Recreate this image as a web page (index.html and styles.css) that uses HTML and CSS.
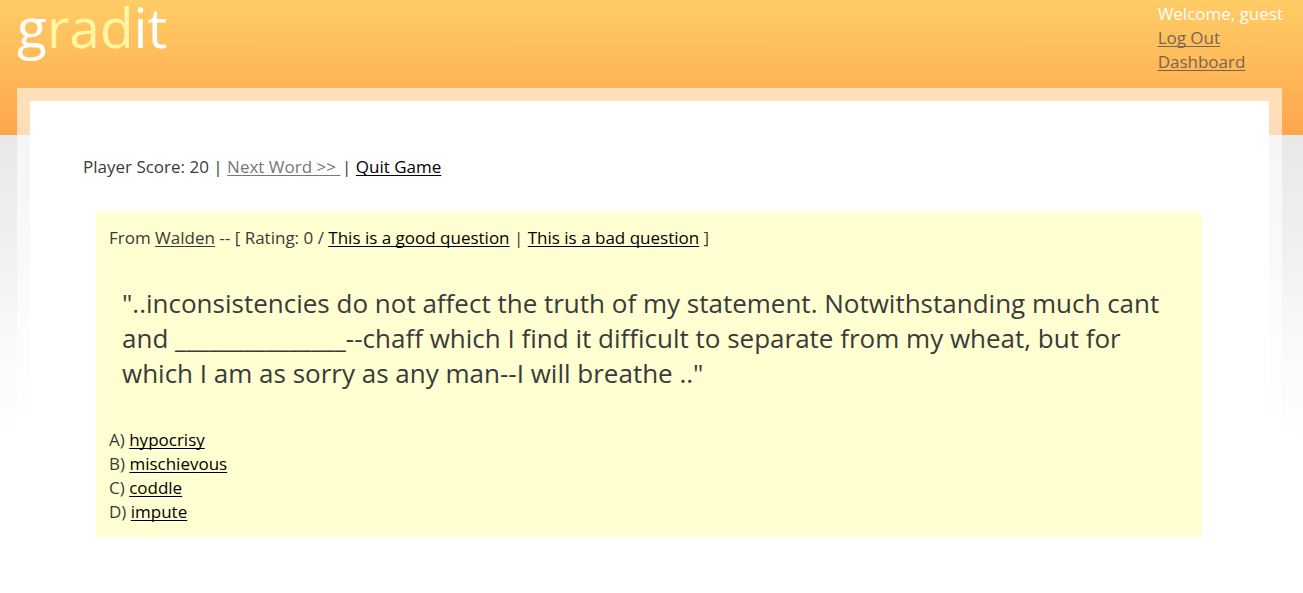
FILE: index.html
```html
<!DOCTYPE html>
<html lang="en">
<head>
<meta charset="utf-8">
<title>gradit</title>
<link rel="stylesheet" href="styles.css">
</head>
<body>
<header class="header">
  <h1 class="logo">g<span class="logo-accent">rad</span>it</h1>
  <nav class="account">
    <span class="welcome">Welcome, guest</span>
    <a href="#">Log Out</a>
    <a href="#">Dashboard</a>
  </nav>
</header>
<main class="frame">
  <div class="status">Player Score: 20 | <a class="next" href="#">Next Word &gt;&gt;&nbsp;</a>&#8202;| <a href="#">Quit Game</a></div>
  <section class="question">
    <div class="source">From <a class="book" href="#">Walden</a> -- [ Rating: 0 / <a href="#">This is a good question</a> | <a href="#">This is a bad question</a> ]</div>
    <blockquote class="quote">"..inconsistencies do not affect the truth of my statement. Notwithstanding much cant and _______________--chaff which I find it difficult to separate from my wheat, but for which I am as sorry as any man--I will breathe .."</blockquote>
    <div class="answers">
      <div>A) <a href="#">hypocrisy</a></div>
      <div>B) <a href="#">mischievous</a></div>
      <div>C) <a href="#">coddle</a></div>
      <div>D) <a href="#">impute</a></div>
    </div>
  </section>
</main>
</body>
</html>
```
FILE: styles.css
```css
* { box-sizing: border-box; }
body {
  margin: 0;
  min-height: 100vh;
  color: #3a3a3a;
  font: 17px/24px "Open Sans", sans-serif;
  background:
    linear-gradient(#ffcc66, #ffa64c) 0 0 / 100% 135px no-repeat,
    linear-gradient(#e8e8e8, #eeefef 33%, #f9f9f9 66%, #ffffff) 0 135px / 100% 310px no-repeat,
    #ffffff;
}
a {
  color: #000000;
  text-decoration-skip-ink: none;
  text-underline-offset: 2px;
  text-decoration-thickness: 1px;
}
.header {
  display: flex;
  justify-content: space-between;
  height: 88px;
  padding: 2px 20px 0 17px;
}
.logo {
  margin: 0;
  color: #ffffff;
  font-size: 55px;
  font-weight: 500;
  line-height: 50px;
}
.logo-accent { color: #fff7a1; }
.account {
  display: flex;
  flex-direction: column;
  align-items: flex-start;
}
.account a { color: #776655; }
.welcome { color: #ffffff; }
.frame {
  margin: 0 21px 0 17px;
  padding: 54px 67px 56px 53px;
  border: 13px solid rgba(255, 255, 255, 0.6);
  border-bottom: 0;
  background: #ffffff;
  background-clip: padding-box;
}
.status .next { color: #777777; }
.question {
  margin: 33px 0 0 13px;
  padding: 14px 13px 13px;
  background: #ffffd1;
}
.source .book { color: #3a3a3a; }
.quote {
  margin: 36px 0 37px;
  padding: 0 13px;
  font-size: 26px;
  font-weight: 500;
  line-height: 35px;
}
```
